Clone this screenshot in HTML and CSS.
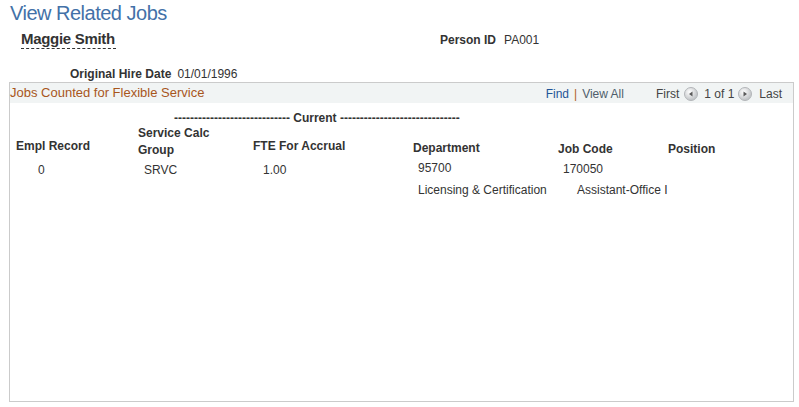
FILE: index.html
```html
<!DOCTYPE html>
<html>
<head>
<meta charset="utf-8">
<link rel="stylesheet" href="styles.css">
</head>
<body>
<h1 class="title">View Related Jobs</h1>
<div class="person-row">
  <span class="name">Maggie Smith</span>
  <span class="pid"><span class="lbl">Person ID</span><span class="val">PA001</span></span>
</div>
<div class="hire-row">
  <span class="lbl">Original Hire Date</span><span class="val hire-val">01/01/1996</span>
</div>
<div class="grid">
  <div class="grid-head">
    <span class="grid-title">Jobs Counted for Flexible Service</span>
    <div class="nav">
      <span class="find">Find</span><span class="sep">|</span><span class="viewall">View All</span>
      <span class="first">First</span>
      <svg class="navbtn prev" width="14" height="14" viewBox="0 0 14 14"><defs><radialGradient id="g1" cx="40%" cy="35%" r="70%"><stop offset="0" stop-color="#ffffff"/><stop offset="1" stop-color="#b9bcbf"/></radialGradient></defs><circle cx="7" cy="7" r="6.5" fill="url(#g1)" stroke="#b3b6b9"/><path d="M5 7 L8.5 4.5 L8.5 9.5 Z" fill="#5a5a5a"/></svg>
      <span class="count">1 of 1</span>
      <svg class="navbtn next" width="14" height="14" viewBox="0 0 14 14"><defs><radialGradient id="g2" cx="40%" cy="35%" r="70%"><stop offset="0" stop-color="#ffffff"/><stop offset="1" stop-color="#b9bcbf"/></radialGradient></defs><circle cx="7" cy="7" r="6.5" fill="url(#g2)" stroke="#b3b6b9"/><path d="M9 7 L5.5 4.5 L5.5 9.5 Z" fill="#5a5a5a"/></svg>
      <span class="last">Last</span>
    </div>
  </div>
  <div class="grid-body">
    <div class="current">----------------------------- Current ------------------------------</div>
    <div class="cols">
      <div class="col c1"><div class="hd">Empl Record</div><div class="v">0</div></div>
      <div class="col c2"><div class="hd two">Service Calc<br>Group</div><div class="v">SRVC</div></div>
      <div class="col c3"><div class="hd">FTE For Accrual</div><div class="v">1.00</div></div>
      <div class="col c4"><div class="hd">Department</div><div class="v">95700</div><div class="v2">Licensing &amp; Certification</div></div>
      <div class="col c5"><div class="hd">Job Code</div><div class="v">170050</div><div class="v2">Assistant-Office I</div></div>
      <div class="col c6"><div class="hd">Position</div></div>
    </div>
  </div>
</div>
</body>
</html>
```

FILE: styles.css
```css
html, body {
  margin: 0;
  padding: 0;
  background: #ffffff;
}
body {
  font-family: "Liberation Sans", Arial, sans-serif;
  font-size: 12px;
  color: #333333;
  width: 799px;
  height: 407px;
  overflow: hidden;
}
.title {
  margin: 2px 0 0 10px;
  font-size: 20px;
  line-height: 23px;
  font-weight: normal;
  letter-spacing: -0.5px;
  color: #4371a8;
}
.person-row {
  display: flex;
  align-items: baseline;
  margin-top: 5px;
  height: 19px;
}
.name {
  margin-left: 21px;
  font-size: 15px;
  line-height: 18px;
  font-weight: bold;
  letter-spacing: -0.3px;
  color: #333333;
  border-bottom: 1px dashed #333333;
  width: 95px;
  white-space: nowrap;
}
.pid {
  margin-left: 324px;
  line-height: 14px;
}
.lbl {
  font-weight: bold;
  color: #333333;
}
.val {
  margin-left: 8px;
  color: #333333;
}
.hire-val {
  margin-left: 6px;
}
.hire-row {
  margin-top: 18px;
  margin-left: 70px;
  line-height: 14px;
  height: 14px;
}
.grid {
  margin: 1px 0 0 9px;
  width: 785px;
  height: 320px;
  box-sizing: border-box;
  border: 1px solid #cbcbcb;
}
.grid-head {
  height: 20px;
  background: #f1f4f4;
  display: flex;
  align-items: center;
  justify-content: space-between;
  padding: 0 11px 0 0;
}
.grid-title {
  font-size: 13px;
  line-height: 20px;
  color: #a8561c;
}
.nav {
  display: flex;
  align-items: center;
  line-height: 20px;
  padding-top: 1px;
}
.find {
  color: #1f5497;
}
.sep {
  color: #b0621f;
  margin: 0 5px 0 5px;
}
.viewall {
  color: #4f5d6b;
}
.first {
  margin-left: 32px;
  color: #444444;
}
.navbtn {
  display: block;
}
.navbtn.prev {
  margin: 0 6px 0 5px;
}
.navbtn.next {
  margin: 0 7px 0 4px;
}
.count {
  color: #444444;
}
.last {
  color: #444444;
}
.grid-body {
  padding-top: 8px;
}
.current {
  margin-left: 164px;
  line-height: 14px;
  font-weight: bold;
  white-space: nowrap;
  color: #333333;
}
.cols {
  display: flex;
  line-height: 14px;
}
.col {
  flex: none;
}
.hd {
  font-weight: bold;
  white-space: nowrap;
}
.hd.two {
  line-height: 17px;
}
.v, .v2 {
  white-space: nowrap;
}
.c1 { width: 122px; padding: 14px 0 0 6px; }
.c1 .v { margin: 10px 0 0 22px; }
.c2 { width: 115px; padding-top: 0; }
.c2 .v { margin: 4px 0 0 6px; }
.c3 { width: 160px; padding-top: 14px; }
.c3 .v { margin: 10px 0 0 10px; }
.c4 { width: 145px; padding-top: 16px; }
.c4 .v { margin: 6px 0 0 5px; }
.c4 .v2 { margin: 8px 0 0 5px; }
.c5 { width: 110px; padding-top: 17px; }
.c5 .v { margin: 6px 0 0 5px; }
.c5 .v2 { margin: 7px 0 0 19px; }
.c6 { padding-top: 17px; }
```
